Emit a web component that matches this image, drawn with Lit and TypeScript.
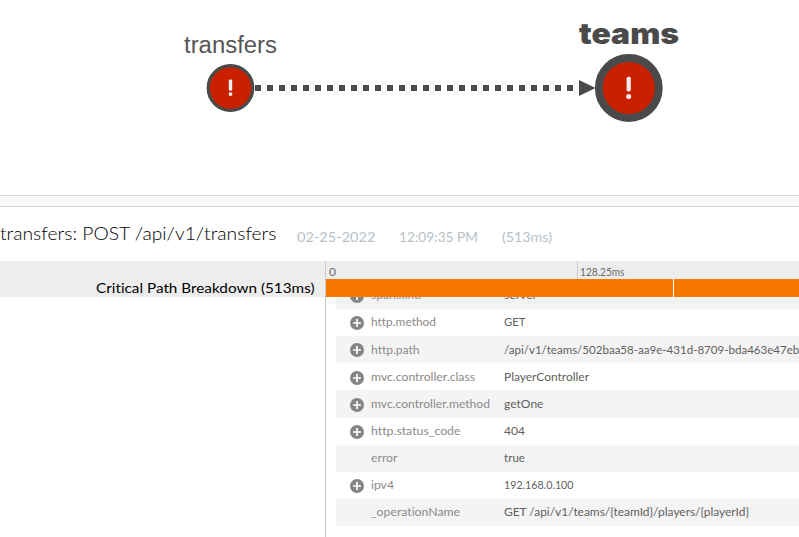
import { LitElement, html, css, svg, nothing } from "lit";
import { customElement, property } from "lit/decorators.js";

@customElement("fit-text")
class FitText extends LitElement {
  @property({ type: Number }) width = 0;
  static styles = css`
    :host { display: block; white-space: nowrap; }
    span { display: inline-block; transform-origin: 0 50%; }
  `;
  firstUpdated() {
    this.fit();
    document.fonts?.ready.then(() => this.fit());
  }
  fit() {
    const span = this.renderRoot.querySelector("span") as HTMLElement;
    span.style.transform = "none";
    const natural = span.getBoundingClientRect().width;
    if (natural > 0) span.style.transform = `scaleX(${this.width / natural})`;
    this.style.width = `${this.width}px`;
  }
  render() {
    return html`<span><slot></slot></span>`;
  }
}

interface Tag { key: string; keyWidth: number; value: string; valueWidth: number; expandable: boolean; }

const TAGS: Tag[] = [
  { key: "span.kind", keyWidth: 50, value: "server", valueWidth: 33, expandable: true },
  { key: "http.method", keyWidth: 65, value: "GET", valueWidth: 21.5, expandable: true },
  { key: "http.path", keyWidth: 48.5, value: "/api/v1/teams/502baa58-aa9e-431d-8709-bda463e47eb4", valueWidth: 302, expandable: true },
  { key: "mvc.controller.class", keyWidth: 104, value: "PlayerController", valueWidth: 85, expandable: true },
  { key: "mvc.controller.method", keyWidth: 119, value: "getOne", valueWidth: 39.5, expandable: true },
  { key: "http.status_code", keyWidth: 89.5, value: "404", valueWidth: 21, expandable: true },
  { key: "error", keyWidth: 26.5, value: "true", valueWidth: 21, expandable: false },
  { key: "ipv4", keyWidth: 23, value: "192.168.0.100", valueWidth: 69.5, expandable: true },
  { key: "_operationName", keyWidth: 89, value: "GET /api/v1/teams/{teamId}/players/{playerId}", valueWidth: 245, expandable: false },
];

@customElement("service-map")
class ServiceMap extends LitElement {
  static styles = css`
    :host { display: block; height: 195px; overflow: hidden; background: #fff; }
    svg { display: block; }
    .name { font: 23px "Liberation Sans", Arial, sans-serif; fill: #565656; }
    .active { font: 900 29px Inter, "Liberation Sans", sans-serif; fill: #4a4a4a; }
    .edge { stroke: #4a4a4a; stroke-width: 6; stroke-dasharray: 6 6; }
    .arrow { fill: #4a4a4a; }
    .node { fill: #c92100; stroke: #4a4a4a; }
    .mark { fill: #f3eeee; }
  `;
  render() {
    return html`<svg width="799" height="195" viewBox="0 0 799 195">
      ${svg`
        <line class="edge" x1="255" y1="88" x2="579" y2="88"></line>
        <path class="arrow" d="M579 80L595.5 88L579 96Z"></path>
        <circle class="node" cx="230.5" cy="88" r="22.3" stroke-width="3.2"></circle>
        <rect class="mark" x="228.8" y="79.6" width="3.4" height="11.2" rx="1.2"></rect>
        <circle class="mark" cx="230.5" cy="94.1" r="1.9"></circle>
        <circle class="node" cx="628.8" cy="88" r="30" stroke-width="7.8"></circle>
        <rect class="mark" x="626.6" y="76.8" width="4.2" height="14.6" rx="1.6"></rect>
        <circle class="mark" cx="628.7" cy="96.4" r="2.5"></circle>
        <text class="name" x="184" y="52.5" textLength="93" lengthAdjust="spacingAndGlyphs">transfers</text>
        <text class="active" x="579" y="43.5" textLength="100" lengthAdjust="spacingAndGlyphs">teams</text>
      `}
    </svg>`;
  }
}

@customElement("app-root")
class AppRoot extends LitElement {
  static styles = css`
    :host { display: flex; flex-direction: column; height: 537px; overflow: hidden; background: #fff; font-family: Lato, "Open Sans", sans-serif; font-variant-ligatures: none; color: #000; }
    .divider { box-sizing: border-box; height: 12px; flex: none; background: #fafafa; border-top: 1px solid #dadada; border-bottom: 1px solid #dadada; }
    .title { display: flex; height: 54px; flex: none; }
    .operation { font-size: 18.5px; font-weight: 300; line-height: 24px; margin: 14px 20px 0 0; }
    .meta { display: flex; gap: 24px; font-size: 14px; line-height: 20px; color: #b6c1c7; margin-top: 20px; font-weight: 400; }
    .trace { display: grid; grid-template-columns: 325px 1fr; flex: 1; min-height: 0; }
    .critical { display: flex; justify-content: flex-end; box-sizing: border-box; height: 36px; background: #ededed; padding: 17px 10.5px 0 0; font-size: 14px; line-height: 20px; }
    .timeline { display: flex; flex-direction: column; border-left: 1px solid #ccc; min-width: 0; min-height: 0; overflow: hidden; }
    .scale { display: grid; grid-template-columns: 251px 1fr; height: 18px; flex: none; background: #ededed; color: #6a6a6a; font-size: 10.5px; line-height: 14px; }
    .tick { padding: 4px 0 0 2.5px; }
    .tick + .tick { border-left: 1px solid #ccc; padding-left: 2px; }
    .bars { display: grid; grid-template-columns: 347px 1fr; gap: 1px; height: 18px; flex: none; background: #fff; }
    .bar { background: #f77800; }
    .viewport { display: flex; flex-direction: column; justify-content: flex-end; flex: 1; min-height: 0; overflow: hidden; padding: 0 0 11px 10px; }
    .tag { display: grid; grid-template-columns: 35px 133px 1fr; height: 27.14px; flex: none; font-size: 11.5px; line-height: 18px; }
    .tag:nth-child(odd) { background: #f4f4f4; }
    .icon { padding: 7.3px 0 0 14px; line-height: 0; }
    .key, .value { padding-top: 4.4px; }
    .key { color: #8a8a8a; }
    .value { color: #606060; overflow: hidden; }
  `;
  render() {
    return html`
      <service-map></service-map>
      <div class="divider"></div>
      <header class="title">
        <fit-text class="operation" width="276.5">transfers: POST /api/v1/transfers</fit-text>
        <div class="meta">
          <fit-text width="78.5">02-25-2022</fit-text>
          <fit-text width="79">12:09:35 PM</fit-text>
          <fit-text width="50">(513ms)</fit-text>
        </div>
      </header>
      <main class="trace">
        <div class="names">
          <div class="critical"><fit-text width="218.5">Critical Path Breakdown (513ms)</fit-text></div>
        </div>
        <div class="timeline">
          <div class="scale">
            <div class="tick"><fit-text width="7">0</fit-text></div>
            <div class="tick"><fit-text width="44.5">128.25ms</fit-text></div>
          </div>
          <div class="bars"><div class="bar"></div><div class="bar"></div></div>
          <div class="viewport">
            ${TAGS.map((t) => html`<div class="tag">
              <div class="icon">${t.expandable
                ? html`<svg width="14" height="14" viewBox="0 0 14 14"><circle cx="7" cy="7" r="7" fill="#858585"></circle><path d="M7 3V11M3 7H11" stroke="#fff" stroke-width="1.7"></path></svg>`
                : nothing}</div>
              <div class="key"><fit-text width=${t.keyWidth}>${t.key}</fit-text></div>
              <div class="value"><fit-text width=${t.valueWidth}>${t.value}</fit-text></div>
            </div>`)}
          </div>
        </div>
      </main>`;
  }
}
